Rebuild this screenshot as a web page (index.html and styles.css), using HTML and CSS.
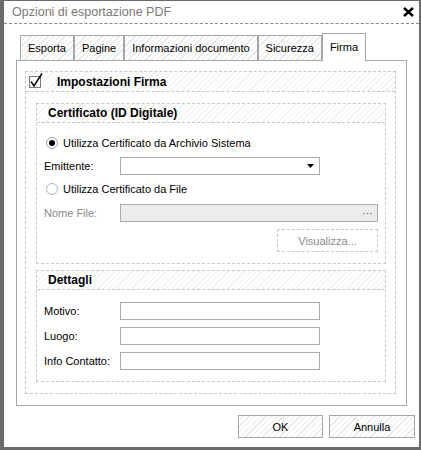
FILE: index.html
```html
<!DOCTYPE html>
<html>
<head>
<meta charset="utf-8">
<link rel="stylesheet" href="styles.css">
</head>
<body>
<div class="window">
  <div class="titlebar">
    <span class="title">Opzioni di esportazione PDF</span>
    <svg class="close" width="11" height="10" viewBox="0 0 11 10"><path d="M1 1 L10 9 M10 1 L1 9" stroke="#000" stroke-width="2.4"/></svg>
  </div>
  <div class="tabs">
    <div class="tab">Esporta</div>
    <div class="tab">Pagine</div>
    <div class="tab">Informazioni documento</div>
    <div class="tab">Sicurezza</div>
    <div class="tab active">Firma</div>
  </div>
  <div class="panel">
    <div class="group outer">
      <div class="ghead">
        <svg class="check" width="16" height="16" viewBox="0 0 16 16">
          <rect x="0.5" y="3.5" width="11" height="11" fill="#fff" stroke="#7a7a7a"/>
          <path d="M2 8.5 L5 13 L13 0.5" fill="none" stroke="#000" stroke-width="1.4"/>
        </svg>
        <span class="gtitle">Impostazioni Firma</span>
      </div>
      <div class="gbody outerbody">
        <div class="group">
          <div class="ghead"><span class="gtitle">Certificato (ID Digitale)</span></div>
          <div class="gbody cert">
            <div class="radio-row r1">
              <span class="radio on"></span><span>Utilizza Certificato da Archivio Sistema</span>
            </div>
            <div class="field">
              <span class="lbl">Emittente:</span>
              <div class="input combo"><svg width="7" height="4" viewBox="0 0 7 4"><path d="M0 0 H7 L3.5 4 Z" fill="#000"/></svg></div>
            </div>
            <div class="radio-row r2">
              <span class="radio"></span><span>Utilizza Certificato da File</span>
            </div>
            <div class="field">
              <span class="lbl disabled">Nome File:</span>
              <div class="input file"><span class="dots">&middot;&middot;&middot;</span></div>
            </div>
            <div class="btnrow"><div class="vbtn">Visualizza...</div></div>
          </div>
        </div>
        <div class="group details">
          <div class="ghead"><span class="gtitle">Dettagli</span></div>
          <div class="gbody det">
            <div class="field"><span class="lbl">Motivo:</span><div class="input"></div></div>
            <div class="field"><span class="lbl">Luogo:</span><div class="input"></div></div>
            <div class="field"><span class="lbl">Info Contatto:</span><div class="input"></div></div>
          </div>
        </div>
      </div>
    </div>
  </div>
  <div class="footer">
    <div class="btn">OK</div>
    <div class="btn">Annulla</div>
  </div>
</div>
</body>
</html>
```
FILE: styles.css
```css
* { box-sizing: border-box; }
html, body { margin: 0; padding: 0; background: #fff; }
body { font-family: "Liberation Sans", Arial, sans-serif; font-size: 11px; color: #000; }

.window {
  width: 421px; height: 450px;
  border-style: solid; border-color: #6b6b6b;
  border-width: 1px 2px 3px 4px;
  background: #fff;
  display: flex; flex-direction: column;
}
.titlebar {
  height: 23px;
  border-bottom: 1px dashed #8a8a8a;
  display: flex; align-items: center; justify-content: space-between;
  padding: 0 5px 1px 8px;
}
.title { font-size: 12.5px; color: #7a7a7a; }
.close { margin-top: 1px; }

.tabs {
  display: flex; align-items: flex-end;
  margin: 9px 0 0 16px;
  position: relative; z-index: 2;
}
.tab {
  height: 25px;
  border: 1px solid #a6a6a6; border-bottom: none;
  padding: 0 7px;
  display: flex; align-items: center;
  font-size: 11px;
  background: repeating-linear-gradient(135deg, #fff 0 3px, #e6e6e6 3px 4px);
}
.tab.active {
  height: 28px; background: #fff;
  margin-bottom: -1px; padding-bottom: 2px;
}

.panel {
  margin-left: 12px;
  width: 391px; height: 346px;
  border: 1px solid #a6a6a6;
  background: #fff;
  position: relative;
  padding: 10px 10px 0 8px;
}
.panel::after {
  content: ""; position: absolute; z-index: -1;
  left: 2px; top: 2px; right: -4px; bottom: -4px;
  border: 1px solid #a6a6a6;
}

.group { border: 1px dashed #c8c8c8; }
.outer { width: 371px; height: 323px; }
.ghead {
  height: 19px;
  border-bottom: 1px dashed #c8c8c8;
  display: flex; align-items: center;
  padding-left: 11px;
  background: repeating-linear-gradient(135deg, #fff 0 3px, #f1f1f1 3px 4px);
}
.outer > .ghead { padding-left: 3px; height: 20px; }
.check { margin-right: 12px; margin-top: -2px; }
.gtitle { font-weight: bold; font-size: 12px; }

.outerbody { padding: 11px 9px 0 10px; }
.group .group { width: 350px; }
.cert { height: 140px; padding: 0 0 0 7px; display: flex; flex-direction: column; }
.radio-row { display: flex; align-items: center; height: 16px; font-size: 11px; }
.r1 { margin-top: 12px; }
.r2 { margin-top: 6px; }
.radio {
  width: 12px; height: 12px; border-radius: 50%;
  border: 1px solid #a0a0a0; background: #fff;
  margin: 0 5px 0 2px; position: relative;
}
.radio.on::after {
  content: ""; position: absolute; left: 2px; top: 2px;
  width: 6px; height: 6px; border-radius: 50%; background: #000;
}
.r2 .radio { border-color: #b4b4b4; }

.field { display: flex; align-items: center; height: 18px; }
.cert .field:nth-child(2) { margin-top: 6px; }
.cert .field:nth-child(4) { margin-top: 7px; }
.lbl { width: 76px; font-size: 11px; }
.lbl.disabled { color: #8a8a8a; }
.input {
  width: 200px; height: 18px;
  border: 1px solid #ababab; background: #fff;
}
.combo { display: flex; align-items: center; justify-content: flex-end; padding-right: 5px; }
.file {
  width: 258px; background: #ececec;
  display: flex; align-items: center; justify-content: flex-end; padding-right: 4px;
  color: #555; font-size: 11px;
}
.btnrow { display: flex; justify-content: flex-end; margin-top: 7px; padding-right: 7px; }
.vbtn {
  width: 101px; height: 23px;
  border: 1px dashed #c8c8c8;
  display: flex; align-items: center; justify-content: center;
  color: #8a8a8a; font-size: 11px;
}

.details { margin-top: 6px; }
.det { height: 91px; padding: 12px 0 0 7px; display: flex; flex-direction: column; gap: 7px; }

.footer {
  display: flex; justify-content: flex-end; gap: 6px;
  margin-top: 9px; padding-right: 4px;
}
.btn {
  width: 85px; height: 23px;
  border: 1px solid #a6a6a6;
  display: flex; align-items: center; justify-content: center;
  font-size: 11px;
  background: repeating-linear-gradient(135deg, #fff 0 3px, #e6e6e6 3px 4px);
}
.btn:last-child { width: 86px; }
```
